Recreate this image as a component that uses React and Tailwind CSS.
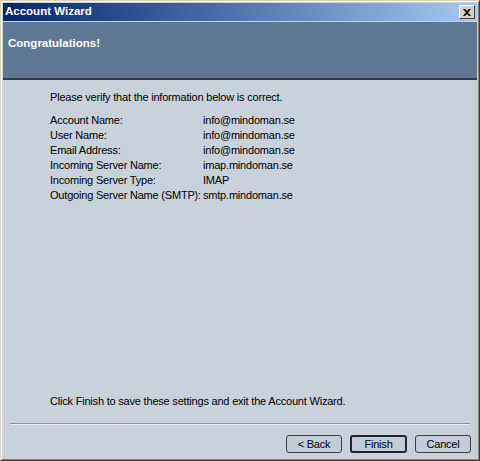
export default function App() {
  const rows = [
    ['Account Name:', 'info@mindoman.se'],
    ['User Name:', 'info@mindoman.se'],
    ['Email Address:', 'info@mindoman.se'],
    ['Incoming Server Name:', 'imap.mindoman.se'],
    ['Incoming Server Type:', 'IMAP'],
    ['Outgoing Server Name (SMTP):', 'smtp.mindoman.se'],
  ];

  return (
    <div
      className="w-[480px] h-[461px] flex flex-col bg-[#d4d0c8] border-t border-l border-t-[#d4d0c8] border-l-[#d4d0c8] border-r border-b border-r-[#404040] border-b-[#404040] text-[11px] tracking-[-0.2px] text-black"
      style={{ fontFamily: '"Liberation Sans", Arial, sans-serif' }}
    >
      <div className="flex-1 flex flex-col border-t border-l border-t-white border-l-white border-r border-b border-r-[#808080] border-b-[#808080] p-px">
        {/* title bar */}
        <div className="h-[18px] flex items-center justify-between pl-[2px] pr-[2px] bg-gradient-to-r from-[#0a246a] to-[#a6caf0]">
          <span className="font-bold text-white text-[11.5px] tracking-normal leading-none">Account Wizard</span>
          <button className="w-[16px] h-[14px] flex items-center justify-center bg-[#d4d0c8] border-t border-l border-t-white border-l-white border-r border-b border-r-[#404040] border-b-[#404040]">
            <svg width="8" height="7" viewBox="0 0 8 7">
              <path d="M0 0h2l2 2 2-2h2L5 3.5 8 7H6L4 5 2 7H0l3-3.5z" fill="#000" />
            </svg>
          </button>
        </div>

        {/* header band */}
        <div className="mt-px h-[58px] bg-[#5e7893] border-b-2 border-b-[#2f3a45] px-[5px] pt-[13px]">
          <span className="font-bold text-white text-[11.5px] tracking-normal">Congratulations!</span>
        </div>

        {/* body */}
        <div className="flex-1 flex flex-col bg-[#c9d1da] leading-[15px]">
          <div className="pl-[47px] pt-[10px]">
            <p>Please verify that the information below is correct.</p>
            <div className="mt-[8px] grid grid-cols-[153px_1fr] whitespace-nowrap">
              {rows.map(([label, value]) => (
                <div key={label} className="contents">
                  <span>{label}</span>
                  <span>{value}</span>
                </div>
              ))}
            </div>
          </div>
          <div className="flex-1" />
          <p className="pl-[47px]">Click Finish to save these settings and exit the Account Wizard.</p>

          <div className="mx-[7px] mt-[14px] h-[2px] border-t border-t-[#8c949c] border-b border-b-[#e6eaee]" />

          <div className="flex justify-end gap-[8px] pr-[6px] pt-[10px] pb-[5px]">
            <button className="w-[56px] h-[18px] rounded-[3px] border border-[#3b3f44] bg-[#c3ccd6] leading-none">
              &lt; Back
            </button>
            <button className="w-[57px] h-[18px] rounded-[3px] border-2 border-[#22262a] bg-[#c3ccd6] leading-none">
              Finish
            </button>
            <button className="w-[56px] h-[18px] rounded-[3px] border border-[#3b3f44] bg-[#c3ccd6] leading-none">
              Cancel
            </button>
          </div>
        </div>
      </div>
    </div>
  );
}
